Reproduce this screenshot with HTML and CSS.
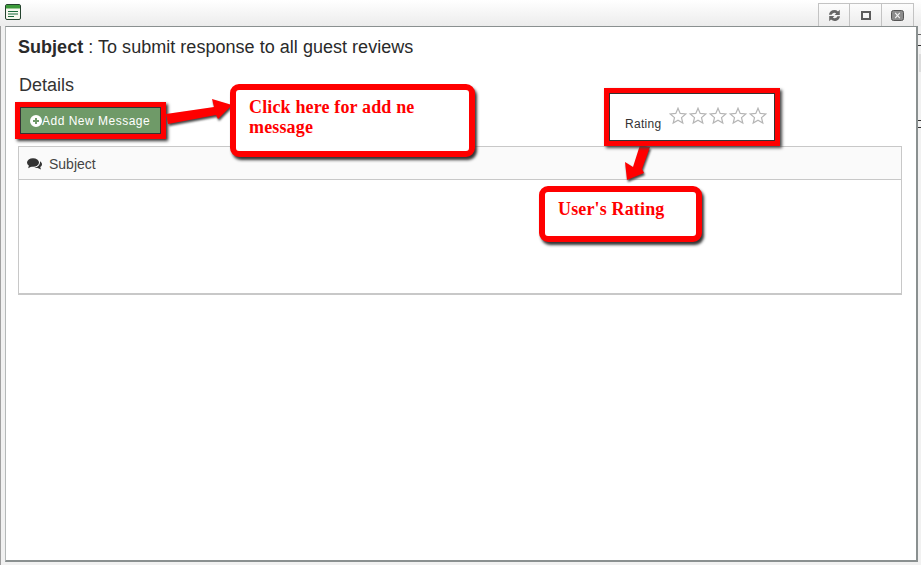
FILE: index.html
```html
<!DOCTYPE html>
<html lang="en">
<head>
    <meta charset="UTF-8">
    <meta name="viewport" content="width=device-width, initial-scale=1.0">
    <title>Guest review message</title>
    <link rel="stylesheet" href="styles.css">
</head>
<body>
    <div class="titlebar">
        <svg class="app-icon" width="16" height="16" viewBox="0 0 16 16">
            <rect x="0.5" y="0.5" width="15" height="15" rx="1.5" fill="#f6f8ee" stroke="#24422e"/>
            <rect x="1" y="1" width="14" height="3.5" fill="#3c9a3a"/>
            <path d="M3 7.5h10M3 10h10M3 12.5h6" stroke="#1b6b3a" stroke-width="1"/>
        </svg>
        <div class="window-buttons">
            <div class="window-button">
                <svg width="13" height="13" viewBox="0 0 13 13">
                    <path d="M1 5.8A5.4 5.4 0 0 1 10 2.4L11.8 0.8V6H6.6L8.2 4.4A3 3 0 0 0 3.6 5.8ZM12 7.2A5.4 5.4 0 0 1 3 10.6L1.2 12.2V7H6.4L4.8 8.6A3 3 0 0 0 9.4 7.2Z" fill="#666"/>
                </svg>
            </div>
            <div class="window-button">
                <svg width="10" height="9" viewBox="0 0 10 9">
                    <path d="M0 0H10V9H0ZM2 2V7H8V2Z" fill="#5a5a5a" fill-rule="evenodd"/>
                </svg>
            </div>
            <div class="window-button">
                <svg width="13" height="11" viewBox="0 0 13 11">
                    <rect x="0.5" y="0.5" width="12" height="10" rx="2" fill="#8c8c8c" stroke="#555"/>
                    <path d="M4.2 2.8L8.8 8.2M8.8 2.8L4.2 8.2" stroke="#f2f2f2" stroke-width="1.1"/>
                </svg>
            </div>
        </div>
    </div>
    <div class="edge-marks"></div>

    <div class="window">
        <h2 class="subject"><b>Subject</b> : To submit response to all guest reviews</h2>
        <h3 class="details">Details</h3>
        <div class="toolbar">
            <button class="add-button">
                <svg width="12" height="12" viewBox="0 0 12 12">
                    <path d="M6 0a6 6 0 1 0 0 12A6 6 0 0 0 6 0ZM5 3h2v2h2v2H7v2H5V7H3V5h2Z" fill="#fff" fill-rule="evenodd"/>
                </svg>Add New Message
            </button>
        </div>
        <div class="panel">
            <div class="panel-heading">
                <svg width="15" height="12" viewBox="0 0 15 12">
                    <ellipse cx="6" cy="4.5" rx="6" ry="4.3" fill="#333"/>
                    <path d="M2 7L1.2 10.2L5.5 8Z" fill="#333"/>
                    <path d="M13 3.2C14.4 4 15 5.1 15 6.2C15 7.4 14.3 8.4 13.2 9.1L14 11.4L10.7 9.9C9.4 10 8.2 9.8 7.2 9.3C10.6 9.2 13.4 7 13 3.2Z" fill="#333"/>
                </svg>
                <span>Subject</span>
            </div>
            <div class="panel-body"></div>
        </div>
    </div>

    <!-- tutorial annotations drawn over the screenshot -->
    <svg class="arrows" width="921" height="565" viewBox="0 0 921 565">
        <g class="arrow-shapes">
            <path d="M166 114L214 107L212 99L232 105L218 119L216 115L168 124Z"/>
            <path d="M640 145L650 147L642 169L644 173L627 180L625 162L633 167Z"/>
        </g>
    </svg>
    <div class="rating-box">
        <span class="rating-label">Rating</span>
        <svg class="stars" width="98" height="18" viewBox="0 0 98 18">
            <defs>
                <path id="star" d="M9 1.2L11.2 6.4L16.8 6.9L12.5 10.6L13.8 16.1L9 13.2L4.2 16.1L5.5 10.6L1.2 6.9L6.8 6.4Z" fill="#fff" stroke="#b5b5b5" stroke-width="1.2"/>
            </defs>
            <use href="#star" x="0"/>
            <use href="#star" x="20"/>
            <use href="#star" x="40"/>
            <use href="#star" x="60"/>
            <use href="#star" x="80"/>
        </svg>
    </div>
    <div class="callout callout-add">Click here for add ne message</div>
    <div class="callout callout-rating">User's Rating</div>
</body>
</html>
```

FILE: styles.css
```css
html, body {
    height: 100%;
}
body {
    margin: 0;
    position: relative;
    overflow: hidden;
    background: linear-gradient(to right, #a0a0a0 1px, #f1f1f1 1px);
    font-family: "Liberation Sans", Arial, sans-serif;
    color: #333;
}
.titlebar {
    height: 26px;
    box-sizing: border-box;
    display: flex;
    justify-content: space-between;
    padding: 3px 7px 0 5px;
    background: linear-gradient(#fff, #ececec);
}
.app-icon {
    margin-top: 1px;
}
.window-buttons {
    display: flex;
    height: 23px;
    border: 1px solid #c3c3c3;
    border-bottom: 0;
    box-sizing: border-box;
}
.window-button {
    width: 31px;
    display: flex;
    align-items: center;
    justify-content: center;
    border-left: 1px solid #c3c3c3;
}
.window-button:first-child {
    width: 30px;
    border-left: 0;
}
/* bits of the page behind the dialog */
.edge-marks {
    position: absolute;
    right: 0;
    top: 34px;
    width: 3px;
    height: 95px;
    background:
        linear-gradient(#666, #666) 0 0 / 3px 1px no-repeat,
        linear-gradient(#333, #333) 0 11px / 3px 1px no-repeat,
        linear-gradient(#ddd, #ddd) 1px 20px / 2px 18px no-repeat,
        linear-gradient(#333, #333) 0 86px / 3px 1px no-repeat,
        linear-gradient(#333, #333) 0 93px / 3px 1px no-repeat;
}
.window {
    height: 536px;
    box-sizing: border-box;
    margin: 0 3px 0 5px;
    padding: 0 14px 0 12px;
    background: #fff;
    border: 1px solid #8a9090;
    border-left-color: #b4b8b8;
    border-right-width: 2px;
    border-bottom-width: 2px;
}
.subject {
    margin: 0;
    padding-top: 10px;
    font-size: 18px;
    font-weight: normal;
    line-height: 20px;
    letter-spacing: 0.03px;
    color: #2a2a2a;
}
.details {
    margin: 18px 0 0;
    padding-left: 1px;
    font-size: 18px;
    font-weight: normal;
    line-height: 20px;
}
.toolbar {
    margin-top: 7px;
    height: 37px;
}
.add-button {
    display: flex;
    align-items: center;
    width: 151px;
    height: 37px;
    margin-left: -3px;
    padding: 0 0 0 10px;
    box-sizing: border-box;
    background: #6f9a68;
    color: #fff;
    font-family: inherit;
    font-size: 12px;
    letter-spacing: 0.5px;
    border: 5px solid #f00;
    box-shadow: inset 0 0 0 1px #333, 2px 2px 3px #333;
}
.panel {
    margin-top: 7px;
    height: 149px;
    box-sizing: border-box;
    border: 1px solid #c8c8c8;
    border-bottom-width: 2px;
}
.panel-heading {
    height: 33px;
    box-sizing: border-box;
    display: flex;
    align-items: center;
    gap: 7px;
    padding: 1px 0 0 8px;
    background: #fafafa;
    border-bottom: 1px solid #c8c8c8;
    font-size: 14px;
    color: #444;
}
.arrows {
    position: absolute;
    left: 0;
    top: 0;
    pointer-events: none;
}
.arrow-shapes {
    fill: #f00;
    filter: drop-shadow(1px 2px 1px #444);
}
.rating-box {
    position: absolute;
    left: 604px;
    top: 88px;
    width: 176px;
    height: 58px;
    box-sizing: border-box;
    background: #fff;
    border: 5px solid #f00;
    box-shadow: inset 0 0 0 1px #333, 2px 2px 3px #444;
}
.rating-label {
    position: absolute;
    left: 16px;
    top: 24px;
    font-size: 12px;
    letter-spacing: 0.3px;
}
.stars {
    position: absolute;
    left: 60px;
    top: 14px;
}
.callout {
    position: absolute;
    box-sizing: border-box;
    background: #fff;
    border: 6px solid #f00;
    border-radius: 9px;
    box-shadow: 2px 3px 3px #333;
    color: #f00;
    font-family: "Liberation Serif", "Times New Roman", serif;
    font-weight: bold;
    font-size: 18px;
    letter-spacing: 0.15px;
    line-height: 20px;
}
.callout-add {
    left: 230px;
    top: 84px;
    width: 245px;
    height: 73px;
    padding: 7px 50px 0 13px;
}
.callout-rating {
    left: 539px;
    top: 186px;
    width: 163px;
    height: 56px;
    padding: 7px 10px 0 13px;
}
```
